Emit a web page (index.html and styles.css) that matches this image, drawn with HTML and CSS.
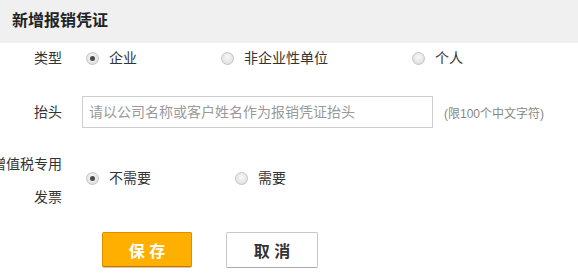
FILE: index.html
```html
<!DOCTYPE html>
<html lang="zh-CN">
<head>
<meta charset="utf-8">
<title>新增报销凭证</title>
<link rel="stylesheet" href="styles.css">
</head>
<body>
<div class="header"><h1 class="title">新增报销凭证</h1></div>
<div class="form">
  <div class="row row-type">
    <div class="label">类型</div>
    <div class="options">
      <label class="option"><span class="radio checked"></span><span>企业</span></label>
      <label class="option"><span class="radio"></span><span>非企业性单位</span></label>
      <label class="option"><span class="radio"></span><span>个人</span></label>
    </div>
  </div>
  <div class="row row-head">
    <div class="label">抬头</div>
    <input class="text-input" type="text" placeholder="请以公司名称或客户姓名作为报销凭证抬头">
    <span class="hint">(限100个中文字符)</span>
  </div>
  <div class="row row-vat">
    <div class="label label-wide">增值税专用发票</div>
    <div class="options options-vat">
      <label class="option"><span class="radio checked"></span><span>不需要</span></label>
      <label class="option"><span class="radio"></span><span>需要</span></label>
    </div>
  </div>
  <div class="actions">
    <button class="btn btn-save" type="button">保 存</button>
    <button class="btn btn-cancel" type="button">取 消</button>
  </div>
</div>
</body>
</html>
```

FILE: styles.css
```css
html, body {
  margin: 0;
  padding: 0;
  background: #fff;
  overflow: hidden;
}
body {
  font-family: "Liberation Sans", "Noto Sans CJK SC", sans-serif;
  font-size: 14px;
  color: #333;
}
.header {
  height: 43px;
  background: #f0f0f0;
  display: flex;
  align-items: center;
  padding-left: 12px;
}
.title {
  margin: 0;
  font-size: 16px;
  font-weight: bold;
  color: #222;
  line-height: 20px;
  position: relative;
  top: -1px;
}
.form {
  display: flex;
  flex-direction: column;
}
.row {
  display: flex;
  align-items: center;
}
.label {
  width: 62px;
  text-align: right;
  flex-shrink: 0;
  line-height: 20px;
}
.row-type {
  height: 30px;
}
.options {
  display: flex;
  align-items: center;
  margin-left: 24px;
}
.option {
  display: flex;
  align-items: center;
  margin-right: 84px;
  line-height: 20px;
  cursor: pointer;
}
.radio {
  width: 11px;
  height: 11px;
  border-radius: 50%;
  border: 1px solid #c4c4c4;
  background: radial-gradient(circle at 50% 40%, #f7f7f7 0%, #e6e6e6 60%, #d8d8d8 100%);
  margin-right: 10px;
  position: relative;
  flex-shrink: 0;
}
.radio.checked::after {
  content: "";
  position: absolute;
  left: 3px;
  top: 3px;
  width: 5px;
  height: 5px;
  border-radius: 50%;
  background: #4a4a4a;
}
.row-head {
  margin-top: 23px;
  height: 32px;
}
.text-input {
  margin-left: 20px;
  width: 351px;
  height: 32px;
  box-sizing: border-box;
  border: 1px solid #cccccc;
  padding: 0 6px;
  font-family: "Liberation Sans", "Noto Sans CJK SC", sans-serif;
  font-size: 14px;
  color: #333;
  outline: none;
}
.text-input::placeholder {
  color: #999;
}
.hint {
  margin-left: 11px;
  font-size: 12px;
  color: #888;
}
.row-vat {
  margin-top: 20px;
  align-items: flex-start;
}
.label-wide {
  width: 72px;
  margin-left: -10px;
  line-height: 33px;
}
.options-vat {
  margin-top: 20px;
}
.actions {
  display: flex;
  margin-top: 18px;
  padding-left: 102px;
}
.btn {
  font-family: "Liberation Sans", "Noto Sans CJK SC", sans-serif;
  font-size: 16px;
  font-weight: bold;
  border-radius: 2px;
  cursor: pointer;
  padding: 0;
}
.btn-save {
  width: 90px;
  height: 35px;
  background: #ffaf00;
  border: 1px solid #e08c00;
  border-bottom-color: #c47600;
  color: #fff;
  box-shadow: 0 1px 0 rgba(160, 90, 0, 0.35);
}
.btn-cancel {
  margin-left: 34px;
  width: 92px;
  height: 36px;
  background: #fff;
  border: 1px solid #c8c8c8;
  border-bottom-color: #a8a8a8;
  color: #333;
  box-shadow: 0 1px 0 rgba(0, 0, 0, 0.08);
}
```
